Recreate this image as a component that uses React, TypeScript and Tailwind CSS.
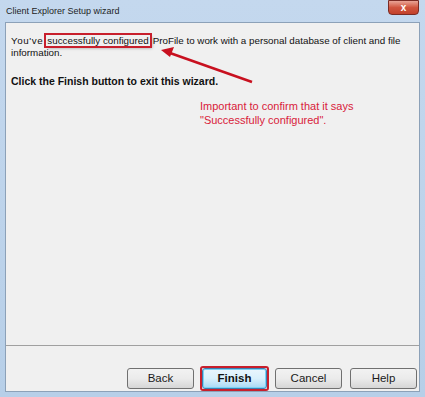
import React from "react";

const btn =
  "w-[67px] h-[21px] rounded-[3px] border border-[#707070] bg-gradient-to-b from-[#f2f2f2] via-[#ebebeb] to-[#d6d6d6] text-[11.5px] text-[#1a1a1a] flex items-center justify-center";

export default function App() {
  return (
    <div
      className="w-[425px] h-[397px] relative flex flex-col bg-gradient-to-b from-[#c4d8ee] to-[#b7cfe8] overflow-hidden"
      style={{ fontFamily: '"Liberation Sans", Arial, sans-serif' }}
    >
      {/* Title bar */}
      <div className="h-[22px] flex items-start justify-between">
        <div className="pl-[6px] pt-[5px] text-[9px] text-[#1e1e1e] leading-[13px]">
          Client Explorer Setup wizard
        </div>
        <div className="mr-[6px] w-[31px] h-[15px] rounded-b-[4px] border border-[#7a2b24] bg-gradient-to-b from-[#e8a496] via-[#d0553f] to-[#c2402a] flex items-center justify-center">
          <span className="text-white text-[10px] font-bold leading-none">x</span>
        </div>
      </div>

      {/* Client area */}
      <div className="mx-[5px] mb-[5px] flex-1 border border-[#8ca1b8] bg-[#f0f0f0] flex flex-col">
        <div className="flex-1 pl-[5px] pr-[6px] pt-[12px] text-[9.8px] text-[#111] leading-[12px]">
          <p>
            <span className="tracking-[0.6px]">You've</span>
            <span className="ml-[3px] mr-[3px] px-[1px] outline outline-2 outline-[#c81f2c] shadow-[2px_2px_3px_rgba(0,0,0,0.35)]">
              successfully configured
            </span>
            ProFile to work with a personal database of client and file information.
          </p>
          <p className="mt-[16px] font-bold text-[10.5px]">Click the Finish button to exit this wizard.</p>
        </div>
        <div className="h-px bg-[#a0a0a0] mx-0" />
        <div className="h-[45px] flex items-end justify-end pb-[2px] pr-[2px] gap-[8px]">
          <div className={btn}>Back</div>
          <div className="outline outline-2 outline-[#c81f2c] rounded-[1px]">
            <div className="w-[65px] h-[21px] rounded-[3px] border border-[#3c7fb1] bg-gradient-to-b from-[#eaf6fd] via-[#d9f0fc] to-[#a7d9f5] shadow-[inset_0_0_0_1px_#7ad3f5] text-[11.5px] font-bold text-[#111] flex items-center justify-center">
              Finish
            </div>
          </div>
          <div className={btn}>Cancel</div>
          <div className={btn}>Help</div>
        </div>
      </div>

      {/* Annotation */}
      <svg className="absolute left-0 top-0 pointer-events-none" width="425" height="397">
        <line x1="252" y1="82" x2="170" y2="53" stroke="#c8101f" strokeWidth="2.5" />
        <polygon points="161,50 174,47 170,57" fill="#c8101f" />
      </svg>
      <div className="absolute left-[200px] top-[99px] text-[11px] leading-[14px] text-[#d9213a]">
        <div>Important to confirm that it says</div>
        <div>"Successfully configured".</div>
      </div>
    </div>
  );
}
